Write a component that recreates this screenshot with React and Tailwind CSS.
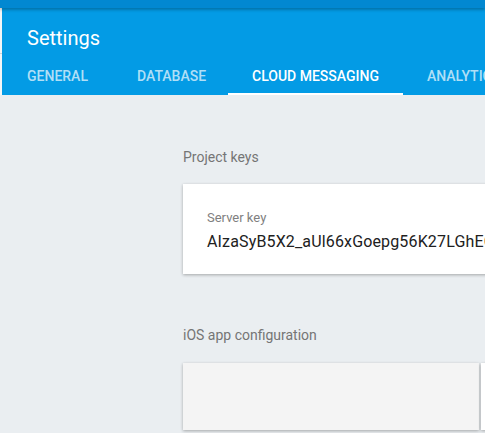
import React from "react";

const tabs = [
  { label: "General", w: "w-[110px]" },
  { label: "Database", w: "w-[115px]" },
  { label: "Cloud Messaging", w: "w-[175px]", active: true },
  { label: "Analytics", w: "w-[130px]" },
];

export default function App() {
  return (
    <div className="w-[485px] h-[433px] overflow-hidden bg-[#eaeef1] font-['Roboto',sans-serif]">
      {/* top app bar strip */}
      <div className="relative z-10 h-2 bg-[#0288d1] shadow-[0_2px_3px_rgba(0,0,0,0.25)]" />

      <div className="flex">
        {/* thin side edge */}
        <div className="w-[2px] shrink-0 bg-[#f4f6f7] flex flex-col">
          <div className="h-[45px]" />
          <div className="h-px bg-[#d0d4d6]" />
        </div>

        {/* settings header */}
        <div className="flex-1 min-w-0 bg-[#039be5] pt-[18px]">
          <h1 className="pl-[25px] text-[20px] leading-6 text-white">Settings</h1>
          <div className="mt-[7px] flex pl-px whitespace-nowrap">
            {tabs.map((t) => (
              <div
                key={t.label}
                className={`${t.w} shrink-0 h-[38px] flex items-center ${
                  t.active ? "justify-center" : "pl-6"
                } relative text-[14px] font-medium uppercase ${
                  t.active ? "text-white" : "text-white/70"
                }`}>
                {t.label}
                {t.active && (
                  <span className="absolute left-0 right-0 bottom-0 h-[2px] bg-white" />
                )}
              </div>
            ))}
          </div>
        </div>
      </div>

      {/* content */}
      <div className="pl-[183px] pt-[52px]">
        <p className="text-[14px] leading-5 text-[#757575]">Project keys</p>

        <div className="mt-[17px] w-[340px] h-[90px] bg-white shadow-[0_1px_3px_rgba(0,0,0,0.3)] pl-6 pt-[26px]">
          <p className="text-[13px] leading-4 text-[#808080]">Server key</p>
          <p className="mt-[6px] text-[16px] leading-5 tracking-[0.15px] text-[#212121] whitespace-nowrap">
            AIzaSyB5X2_aUl66xGoepg56K27LGhECx9Tf
          </p>
        </div>

        <p className="mt-[51px] text-[14px] leading-5 text-[#757575]">iOS app configuration</p>

        <div className="mt-[18px] flex gap-[2px]">
          <div className="w-[296px] h-[67px] shrink-0 bg-[#f4f4f4] shadow-[0_1px_3px_rgba(0,0,0,0.3)]" />
          <div className="w-[100px] h-[67px] shrink-0 bg-white shadow-[0_1px_3px_rgba(0,0,0,0.3)]" />
        </div>
      </div>
    </div>
  );
}
